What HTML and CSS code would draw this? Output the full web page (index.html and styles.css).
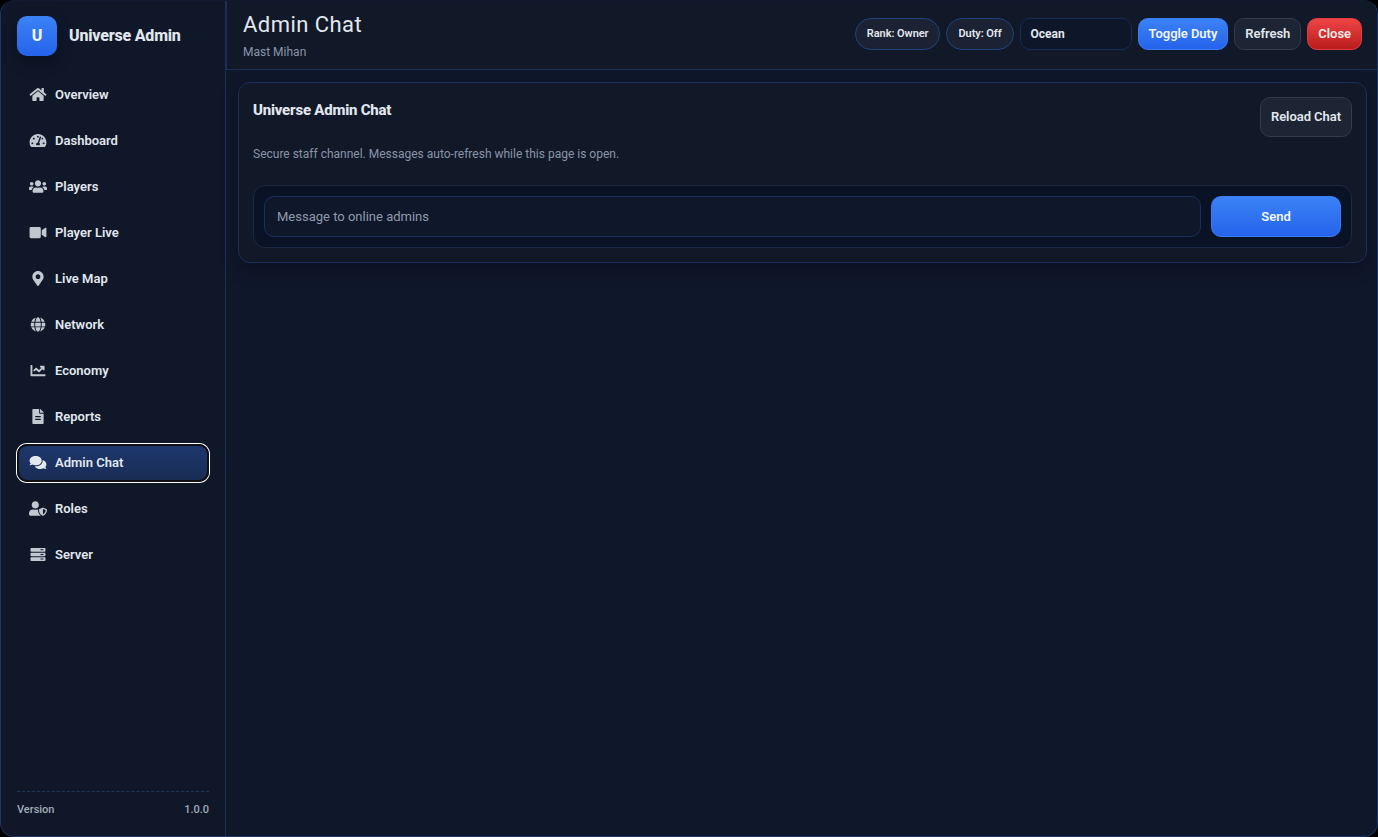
FILE: index.html
```html
<!DOCTYPE html>
<html lang="en">
<head>
    <meta charset="UTF-8">
    <meta name="viewport" content="width=device-width, initial-scale=1.0">
    <title>Universe Admin</title>
    <link rel="stylesheet" href="styles.css">
</head>
<body>
    <div class="app">
        <aside class="sidebar">
            <div class="brand">
                <div class="brand-logo">U</div>
                <div class="brand-name">Universe Admin</div>
            </div>

            <nav class="nav">
                <button class="nav-item">
                    <svg class="icon" viewBox="0 0 576 512"><path d="M280.37 148.26L96 300.11V464a16 16 0 0 0 16 16l112.06-.29a16 16 0 0 0 15.92-16V368a16 16 0 0 1 16-16h64a16 16 0 0 1 16 16v95.64a16 16 0 0 0 16 16.05L464 480a16 16 0 0 0 16-16V300L295.67 148.26a12.19 12.19 0 0 0-15.3 0zM571.6 251.47L488 182.56V44.05a12 12 0 0 0-12-12h-56a12 12 0 0 0-12 12v72.61L318.47 43a48 48 0 0 0-61 0L4.34 251.47a12 12 0 0 0-1.6 16.9l25.5 31A12 12 0 0 0 45.15 301l235.22-193.74a12.19 12.19 0 0 1 15.3 0L530.9 301a12 12 0 0 0 16.9-1.6l25.5-31a12 12 0 0 0-1.7-16.93z"/></svg>
                    <span>Overview</span>
                </button>
                <button class="nav-item">
                    <svg class="icon" viewBox="0 0 576 512"><path d="M288 32C128.94 32 0 160.94 0 320c0 52.8 14.25 102.26 39.06 144.8 5.61 9.62 16.3 15.2 27.44 15.2h443c11.14 0 21.83-5.58 27.44-15.2C561.75 422.26 576 372.8 576 320c0-159.06-128.94-288-288-288zm0 64c14.71 0 26.58 10.13 30.32 23.65-1.11 2.26-2.64 4.23-3.45 6.67l-9.22 27.67c-5.13 3.49-10.97 6.01-17.64 6.01-17.67 0-32-14.33-32-32S270.33 96 288 96zM96 384c-17.67 0-32-14.33-32-32s14.33-32 32-32 32 14.33 32 32-14.33 32-32 32zm48-160c-17.67 0-32-14.33-32-32s14.33-32 32-32 32 14.33 32 32-14.33 32-32 32zm246.77-72.41l-61.33 184C343.13 347.33 352 364.54 352 384c0 11.72-3.38 22.55-8.88 32H232.88c-5.5-9.45-8.88-20.28-8.88-32 0-33.94 26.5-61.43 59.9-63.59l61.34-184.01c4.17-12.56 17.73-19.45 30.36-15.17 12.57 4.19 19.35 17.79 15.17 30.36zm14.66 57.2l15.52-46.55c3.47-1.29 7.13-2.23 11.05-2.23 17.67 0 32 14.33 32 32s-14.33 32-32 32c-11.38-.01-20.89-6.28-26.57-15.22zM480 384c-17.67 0-32-14.33-32-32s14.33-32 32-32 32 14.33 32 32-14.33 32-32 32z"/></svg>
                    <span>Dashboard</span>
                </button>
                <button class="nav-item">
                    <svg class="icon" viewBox="0 0 640 512"><path d="M96 224c35.3 0 64-28.7 64-64s-28.7-64-64-64-64 28.7-64 64 28.7 64 64 64zm448 0c35.3 0 64-28.7 64-64s-28.7-64-64-64-64 28.7-64 64 28.7 64 64 64zm32 32h-64c-17.6 0-33.5 7.1-45.1 18.6 40.3 22.1 68.9 62 75.1 109.4h66c17.7 0 32-14.3 32-32v-32c0-35.3-28.7-64-64-64zm-256 0c61.9 0 112-50.1 112-112S381.9 32 320 32 208 82.1 208 144s50.1 112 112 112zm76.8 32h-8.3c-20.8 10-43.9 16-68.5 16s-47.6-6-68.5-16h-8.3C179.6 288 128 339.6 128 403.2V432c0 26.5 21.5 48 48 48h288c26.5 0 48-21.5 48-48v-28.8c0-63.6-51.6-115.2-115.2-115.2zm-223.7-13.4C161.5 263.1 145.6 256 128 256H64c-35.3 0-64 28.7-64 64v32c0 17.7 14.3 32 32 32h65.9c6.3-47.4 34.9-87.3 75.2-109.4z"/></svg>
                    <span>Players</span>
                </button>
                <button class="nav-item">
                    <svg class="icon" viewBox="0 0 576 512"><path d="M336.2 64H47.8C21.4 64 0 85.4 0 111.8v288.4C0 426.6 21.4 448 47.8 448h288.4c26.4 0 47.8-21.4 47.8-47.8V111.8c0-26.4-21.4-47.8-47.8-47.8zm189.4 37.7L416 177.3v157.4l109.6 75.5c21.2 14.6 50.4-.3 50.4-25.8V127.5c0-25.4-29.1-40.4-50.4-25.8z"/></svg>
                    <span>Player Live</span>
                </button>
                <button class="nav-item">
                    <svg class="icon" viewBox="0 0 384 512"><path d="M172.268 501.67C26.97 291.031 0 269.413 0 192 0 85.961 85.961 0 192 0s192 85.961 192 192c0 77.413-26.97 99.031-172.268 309.67-9.535 13.774-29.93 13.773-39.464 0zM192 272c44.183 0 80-35.817 80-80s-35.817-80-80-80-80 35.817-80 80 35.817 80 80 80z"/></svg>
                    <span>Live Map</span>
                </button>
                <button class="nav-item">
                    <svg class="icon" viewBox="0 0 496 512"><path d="M336.5 160C322 70.7 287.8 8 248 8s-74 62.7-88.5 152h177zM152 256c0 22.2 1.2 43.5 3.3 64h185.3c2.1-20.5 3.3-41.8 3.3-64s-1.2-43.5-3.3-64H155.3c-2.1 20.5-3.3 41.8-3.3 64zm324.7-96c-28.6-67.9-86.5-120.4-158-141.6 24.4 33.8 41.2 84.7 50 141.6h108zM177.2 18.4C105.8 39.6 47.8 92.1 19.3 160h108c8.7-56.9 25.5-107.8 49.9-141.6zM487.4 192H372.7c2.1 21 3.3 42.5 3.3 64s-1.2 43-3.3 64h114.6c5.5-20.5 8.6-41.8 8.6-64s-3.1-43.5-8.5-64zM120 256c0-21.5 1.2-43 3.3-64H8.6C3.2 212.5 0 233.8 0 256s3.2 43.5 8.6 64h114.6c-2-21-3.2-42.5-3.2-64zm39.5 96c14.5 89.3 48.7 152 88.5 152s74-62.7 88.5-152h-177zm159.3 141.6c71.4-21.2 129.4-73.7 158-141.6h-108c-8.8 56.9-25.6 107.8-50 141.6zM19.3 352c28.6 67.9 86.5 120.4 158 141.6-24.4-33.8-41.2-84.7-50-141.6h-108z"/></svg>
                    <span>Network</span>
                </button>
                <button class="nav-item">
                    <svg class="icon" viewBox="0 0 512 512"><path d="M496 384H64V80c0-8.84-7.16-16-16-16H16C7.16 64 0 71.16 0 80v336c0 17.67 14.33 32 32 32h464c8.84 0 16-7.16 16-16v-32c0-8.84-7.16-16-16-16zM464 96H345.94c-21.38 0-32.09 25.85-16.97 40.97l32.4 32.4L288 242.75l-73.37-73.37c-12.5-12.5-32.76-12.5-45.25 0l-68.69 68.69c-6.25 6.25-6.25 16.38 0 22.63l22.62 22.62c6.25 6.25 16.38 6.25 22.63 0L192 237.25l73.37 73.37c12.5 12.5 32.76 12.5 45.25 0l96-96 32.4 32.4c15.12 15.12 40.97 4.41 40.97-16.97V112c.01-8.84-7.15-16-15.99-16z"/></svg>
                    <span>Economy</span>
                </button>
                <button class="nav-item">
                    <svg class="icon" viewBox="0 0 384 512"><path d="M232 136V0H24C10.7 0 0 10.7 0 24v464c0 13.3 10.7 24 24 24h336c13.3 0 24-10.7 24-24V160H256c-13.2 0-24-10.8-24-24zm56 226c0 6.6-5.4 12-12 12H108c-6.6 0-12-5.4-12-12v-14c0-6.6 5.4-12 12-12h168c6.6 0 12 5.4 12 12v14zm0-108v14c0 6.6-5.4 12-12 12H108c-6.6 0-12-5.4-12-12v-14c0-6.6 5.4-12 12-12h168c6.6 0 12 5.4 12 12zm96-132.1v6.1H262V0h0.1c6.4 0 12.5 2.5 17 7l97.9 98c4.5 4.5 7 10.6 7 16.9z"/></svg>
                    <span>Reports</span>
                </button>
                <button class="nav-item active">
                    <svg class="icon" viewBox="0 0 576 512"><path d="M416 192c0-88.4-93.1-160-208-160S0 103.6 0 192c0 34.3 14.1 65.9 38 92-13.4 30.2-35.5 54.2-35.8 54.5-2.2 2.3-2.8 5.7-1.5 8.7S4.8 352 8 352c36.6 0 66.9-12.3 88.7-25 32.2 15.7 70.3 25 111.3 25 114.9 0 208-71.6 208-160zm122 220c23.9-26 38-57.7 38-92 0-66.9-53.5-124.2-129.3-148.1.9 6.6 1.3 13.3 1.3 20.1 0 105.9-107.7 192-240 192-10.8 0-21.3-.8-31.7-1.9C207.8 439.6 281.8 480 368 480c41 0 79.1-9.2 111.3-25 21.8 12.7 52.1 25 88.7 25 3.2 0 6.1-1.9 7.3-4.8 1.3-2.9.7-6.3-1.5-8.7-.3-.3-22.4-24.2-35.8-54.5z"/></svg>
                    <span>Admin Chat</span>
                </button>
                <button class="nav-item">
                    <svg class="icon" viewBox="0 0 640 512"><path d="M622.3 271.1l-115.2-45c-4.1-1.6-12.6-3.7-22.2 0l-115.2 45c-10.7 4.2-17.7 14-17.7 24.9 0 111.6 68.7 188.8 132.9 213.9 9.6 3.7 18 1.6 22.2 0C558.4 489.9 640 420.5 640 296c0-10.9-7-20.7-17.7-24.9zM496 462.4V273.3l95.5 37.3c-5.6 87.1-60.9 135.4-95.5 151.8zM224 256c70.7 0 128-57.3 128-128S294.7 0 224 0 96 57.3 96 128s57.3 128 128 128zm96 40c0-2.5.8-4.8 1.1-7.2-2.5-.1-4.9-.8-7.5-.8h-16.7c-22.2 10.2-46.9 16-72.9 16s-50.6-5.8-72.9-16h-16.7C60.2 288 0 348.2 0 422.4V464c0 26.5 21.5 48 48 48h352c6.8 0 13.3-1.5 19.2-4-54-42.9-99.2-116.7-99.2-212z"/></svg>
                    <span>Roles</span>
                </button>
                <button class="nav-item">
                    <svg class="icon" viewBox="0 0 512 512"><path d="M480 160H32c-17.673 0-32-14.327-32-32V64c0-17.673 14.327-32 32-32h448c17.673 0 32 14.327 32 32v64c0 17.673-14.327 32-32 32zm-48-80h-80c-9 0-16 7-16 16s7 16 16 16h80c9 0 16-7 16-16s-7-16-16-16zm48 236H32c-17.673 0-32-14.327-32-32v-60c0-17.673 14.327-32 32-32h448c17.673 0 32 14.327 32 32v60c0 17.673-14.327 32-32 32zm-48-78h-80c-9 0-16 7-16 16s7 16 16 16h80c9 0 16-7 16-16s-7-16-16-16zm48 238H32c-17.673 0-32-14.327-32-32v-64c0-17.673 14.327-32 32-32h448c17.673 0 32 14.327 32 32v64c0 17.673-14.327 32-32 32zm-48-80h-80c-9 0-16 7-16 16s7 16 16 16h80c9 0 16-7 16-16s-7-16-16-16z"/></svg>
                    <span>Server</span>
                </button>
            </nav>

            <div class="sidebar-footer">
                <span>Version</span>
                <span>1.0.0</span>
            </div>
        </aside>

        <main class="main">
            <header class="topbar">
                <div class="topbar-title">
                    <h1>Admin Chat</h1>
                    <p>Mast Mihan</p>
                </div>
                <div class="topbar-actions">
                    <span class="pill">Rank: Owner</span>
                    <span class="pill">Duty: Off</span>
                    <div class="theme-select">Ocean</div>
                    <button class="btn btn-primary">Toggle Duty</button>
                    <button class="btn">Refresh</button>
                    <button class="btn btn-danger">Close</button>
                </div>
            </header>

            <section class="content">
                <div class="card">
                    <div class="card-head">
                        <h2>Universe Admin Chat</h2>
                        <button class="btn btn-tall">Reload Chat</button>
                    </div>
                    <p class="hint">Secure staff channel. Messages auto-refresh while this page is open.</p>
                    <div class="composer">
                        <input class="input" type="text" placeholder="Message to online admins">
                        <button class="btn btn-primary btn-send">Send</button>
                    </div>
                </div>
            </section>
        </main>
    </div>
</body>
</html>
```
FILE: styles.css
```css
* {
    margin: 0;
    padding: 0;
    box-sizing: border-box;
}

body {
    font-family: Roboto, "Liberation Sans", sans-serif;
    background: #000;
    color: #e2e7ee;
    height: 100vh;
    overflow: hidden;
}

button, input {
    font-family: inherit;
    color: inherit;
}

.app {
    display: flex;
    height: 100vh;
    background: #0f172a;
    border: 1px solid #1b3566;
    border-top-color: #101a30;
    border-radius: 14px;
    overflow: hidden;
}

/* Sidebar */
.sidebar {
    width: 225px;
    flex-shrink: 0;
    display: flex;
    flex-direction: column;
    padding: 15px 15px 16px 16px;
    border-right: 1px solid #1b2f58;
    background: #0f1729;
}

.brand {
    display: flex;
    align-items: center;
    gap: 12px;
    margin-bottom: 20px;
}

.brand-logo {
    width: 40px;
    height: 40px;
    display: flex;
    align-items: center;
    justify-content: center;
    padding-bottom: 1px;
    border-radius: 10px;
    background: linear-gradient(180deg, #3b82f6, #2563eb);
    color: #f1f5ff;
    font-size: 16px;
    font-weight: 800;
    box-shadow: 0 6px 16px rgba(0, 0, 0, 0.3);
}

.brand-name {
    padding-bottom: 1px;
    font-size: 16px;
    font-weight: 800;
    letter-spacing: -0.2px;
}

.nav {
    display: flex;
    flex-direction: column;
    gap: 8px;
    margin-right: 1px;
}

.nav-item {
    display: flex;
    align-items: center;
    gap: 8px;
    height: 38px;
    padding: 0 10px 2px;
    border: 2px solid transparent;
    border-radius: 10px;
    background: none;
    font-size: 13px;
    font-weight: 600;
    text-align: left;
}

.nav-item.active {
    border-color: #101010;
    background: linear-gradient(180deg, #1d376d, #192c54) padding-box;
    box-shadow: 0 0 0 1px #fff;
}

.icon {
    width: 18px;
    height: 15px;
    fill: currentColor;
    opacity: 0.85;
    overflow: visible;
}

.active .icon {
    opacity: 1;
}

.sidebar-footer {
    display: flex;
    justify-content: space-between;
    margin: auto 1px 0 0;
    padding: 11px 0 4px;
    border-top: 1px dashed #1f3557;
    color: #a3acba;
    font-size: 11px;
    font-weight: 500;
    line-height: 13px;
}

/* Top bar */
.main {
    flex: 1;
    min-width: 0;
    display: flex;
    flex-direction: column;
}

.topbar {
    display: flex;
    align-items: center;
    justify-content: space-between;
    height: 69px;
    padding: 0 15px 0 16px;
    background: #111827;
    border-left: 1px solid #1b2f58;
    border-bottom: 1px solid #1b3056;
}

.topbar-title h1 {
    font-size: 22px;
    font-weight: 400;
    line-height: 26px;
    letter-spacing: 0.45px;
}

.topbar-title p {
    margin-top: 7px;
    color: #8a95a7;
    font-size: 12px;
    line-height: 14px;
}

.topbar-actions {
    display: flex;
    align-items: center;
    gap: 6px;
    padding-bottom: 2px;
}

.pill {
    height: 32px;
    padding: 0 11px;
    border: 1px solid #20427d;
    border-radius: 16px;
    background: #1a2233;
    font-size: 11px;
    font-weight: 600;
    line-height: 29px;
    letter-spacing: -0.06px;
}

.theme-select {
    width: 112px;
    height: 32px;
    padding: 0 10px;
    border: 1px solid #172d57;
    border-radius: 10px;
    background: #0e162a;
    font-size: 12px;
    font-weight: 700;
    line-height: 30px;
}

.btn {
    height: 32px;
    padding: 0 10px;
    border: 1px solid #323c4c;
    border-radius: 10px;
    background: #1d2534;
    font-size: 13px;
    font-weight: 600;
    letter-spacing: -0.05px;
}

.btn-primary {
    border-color: #3b7cf2;
    background: linear-gradient(180deg, #3b82f6, #2563eb);
    color: #f1f5ff;
}

.btn-danger {
    border-color: #e23b3e;
    background: linear-gradient(180deg, #ef4444, #b91c1c);
    color: #fbeeee;
}

.topbar-actions .btn {
    padding-bottom: 2px;
}

.btn-tall {
    height: 40px;
    padding-bottom: 2px;
}

/* Chat card */
.content {
    flex: 1;
    padding: 12px 10px 12px 12px;
}

.card {
    padding: 14px;
    border: 1px solid #19305c;
    border-radius: 12px;
    background: #111827;
    box-shadow: 0 6px 18px rgba(0, 0, 0, 0.25);
}

.card-head {
    display: flex;
    align-items: flex-start;
    justify-content: space-between;
    margin-bottom: 10px;
}

.card-head h2 {
    margin-top: 4px;
    font-size: 15px;
    font-weight: 800;
    line-height: 18px;
    letter-spacing: -0.22px;
}

.hint {
    color: #8a95a7;
    font-size: 12px;
    line-height: 14px;
}

.composer {
    display: flex;
    gap: 10px;
    margin-top: 24px;
    padding: 10px;
    border: 1px solid #1b2a44;
    border-radius: 12px;
    background: #0a1326;
}

.input {
    flex: 1;
    height: 41px;
    padding: 0 12px;
    border: 1px solid #19305f;
    border-radius: 10px;
    background: #0f172a;
    font-size: 13px;
    outline: none;
}

.input::placeholder {
    color: #8f9aab;
}

.btn-send {
    width: 130px;
    height: 41px;
}
```
